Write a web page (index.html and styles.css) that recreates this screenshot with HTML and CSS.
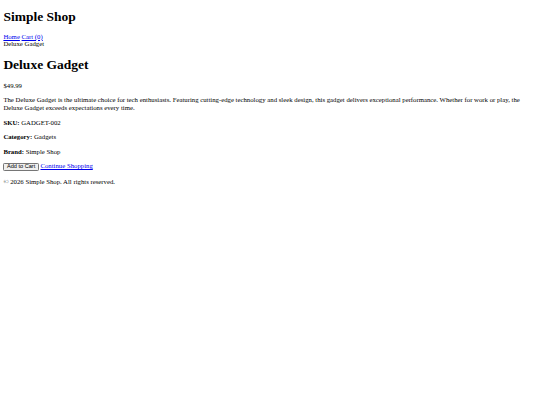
FILE: index.html
```html
<!DOCTYPE html>
<html>
<head>
<meta charset="utf-8">
<title>Deluxe Gadget - Simple Shop</title>
<link rel="stylesheet" href="styles.css">
</head>
<body class="page">
<header class="site-header">
<h1 class="site-title">Simple Shop</h1>
<nav class="nav"><a href="#">Home</a> <a href="#">Cart (0)</a></nav>
</header>
<div class="crumb">Deluxe Gadget</div>
<main class="product">
<h1 class="product-title">Deluxe Gadget</h1>
<p class="text">$49.99</p>
<p class="text">The Deluxe Gadget is the ultimate choice for tech enthusiasts. Featuring cutting-edge technology and sleek design, this gadget delivers exceptional performance. Whether for work or play, the Deluxe Gadget exceeds expectations every time.</p>
<p class="text"><strong>SKU:</strong> GADGET-002</p>
<p class="text"><strong>Category:</strong> Gadgets</p>
<p class="text"><strong>Brand:</strong> Simple Shop</p>
<div class="actions"><button class="btn">Add to Cart</button> <a href="#">Continue Shopping</a></div>
</main>
<footer class="footer"><p class="text">© 2026 Simple Shop. All rights reserved.</p></footer>
</body>
</html>
```
FILE: styles.css
```css
.page {
  margin: 0 3.375px 3.375px;
  font-family: "Liberation Serif", "Times New Roman", serif;
  font-size: 6.75px;
  line-height: 7.76px;
  color: #000;
  background: #fff;
}
.site-title, .product-title {
  font-size: 13.5px;
  line-height: 15.5px;
  margin: 9.045px 0;
  font-weight: bold;
}
.site-title {
  margin-bottom: 8.2px;
}
.text {
  margin: 6.75px 0;
}
a { color: #0000ee; }
.actions {
  line-height: 7.76px;
}
.btn {
  font-family: "Liberation Sans", Arial, sans-serif;
  font-size: 5.625px;
  line-height: 1.05;
  padding: 0.3px 2.53px;
  border: 0.84px solid #767676;
  border-radius: 1.27px;
  background: #efefef;
  color: #000;
  margin: 0;
  vertical-align: baseline;
}
```
